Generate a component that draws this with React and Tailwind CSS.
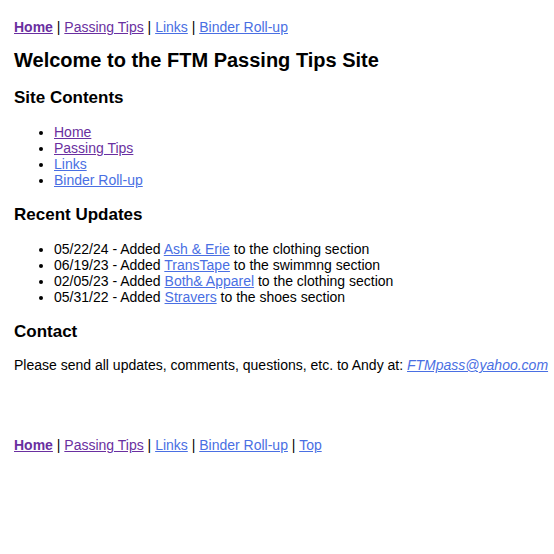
export default function App() {
  const v = "text-[#6a2fa0] underline";
  const l = "text-[#4a6fe3] underline";
  const Nav = ({ top }) => (
    <div className="h-[16px]">
      <a href="#" className={`${v} font-bold`}>Home</a> |{" "}
      <a href="#" className={v}>Passing Tips</a> |{" "}
      <a href="#" className={l}>Links</a> |{" "}
      <a href="#" className={l}>Binder Roll-up</a>
      {top && (
        <>
          {" "}| <a href="#" className={l}>Top</a>
        </>
      )}
    </div>
  );
  return (
    <div className="bg-white min-h-[554px] font-['Liberation_Sans',Arial,sans-serif] text-[14px] leading-[16px] text-black pl-[14px] pt-[19px]">
      <Nav />
      <h1 className="mt-[14px] text-[20px] leading-[23px] font-bold">Welcome to the FTM Passing Tips Site</h1>
      <h2 className="mt-[16px] text-[17px] leading-[20px] font-bold">Site Contents</h2>
      <ul className="mt-[16px] list-disc pl-[40px]">
        <li><a href="#" className={v}>Home</a></li>
        <li><a href="#" className={v}>Passing Tips</a></li>
        <li><a href="#" className={l}>Links</a></li>
        <li><a href="#" className={l}>Binder Roll-up</a></li>
      </ul>
      <h2 className="mt-[17px] text-[17px] leading-[20px] font-bold">Recent Updates</h2>
      <ul className="mt-[16px] list-disc pl-[40px]">
        <li>05/22/24 - Added <a href="#" className={l}>Ash &amp; Erie</a> to the clothing section</li>
        <li>06/19/23 - Added <a href="#" className={l}>TransTape</a> to the swimmng section</li>
        <li>02/05/23 - Added <a href="#" className={l}>Both&amp; Apparel</a> to the clothing section</li>
        <li>05/31/22 - Added <a href="#" className={l}>Stravers</a> to the shoes section</li>
      </ul>
      <h2 className="mt-[17px] text-[17px] leading-[20px] font-bold">Contact</h2>
      <p className="mt-[15px] whitespace-nowrap">
        Please send all updates, comments, questions, etc. to Andy at:{" "}
        <a href="#" className={`${l} italic`}>FTMpass@yahoo.com</a>
      </p>
      <div className="mt-[64px]">
        <Nav top />
      </div>
    </div>
  );
}
